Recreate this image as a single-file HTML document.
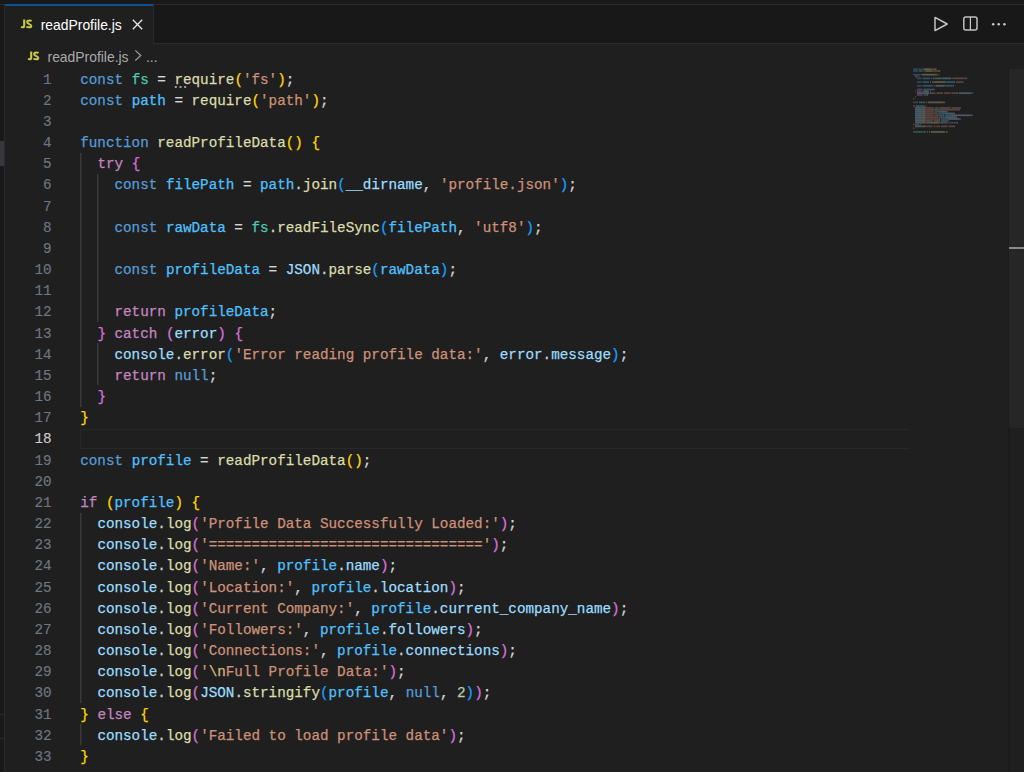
<!DOCTYPE html>
<html><head><meta charset="utf-8"><style>
*{margin:0;padding:0;box-sizing:border-box}
html,body{width:1024px;height:772px;overflow:hidden;background:#1f1f1f}
body{position:relative;font-family:"Liberation Sans",sans-serif}
.a{position:absolute}
.code{position:absolute;left:80.25px;top:69.50px;font-family:"Liberation Mono",monospace;font-size:14.28px;white-space:pre;-webkit-text-stroke:0.25px}
.ln{position:absolute;height:21.17px;line-height:21.17px;left:0}
.num{position:absolute;left:0;width:51.5px;text-align:right;font-family:"Liberation Mono",monospace;font-size:14.28px;color:#6e7681;white-space:pre;-webkit-text-stroke:0.15px}
.g{position:absolute;width:1px;background:#3a3a3a;box-shadow:1px 0 0 #2a2a2a}
.mm{position:absolute;height:1.5px}
</style></head><body>

<div class="a" style="left:0;top:0;width:1024px;height:4px;background:#191919"></div>
<div class="a" style="left:0;top:4px;width:1024px;height:1px;background:#2b2b2b"></div>
<div class="a" style="left:0;top:5px;width:1024px;height:38px;background:#181818"></div>
<div class="a" style="left:0;top:43px;width:1024px;height:1px;background:#2b2b2b"></div>
<div class="a" style="left:0;top:0;width:4px;height:772px;background:#191919"></div>
<div class="a" style="left:0;top:141px;width:3.5px;height:25px;background:#37373d"></div>
<div class="a" style="left:0;top:714px;width:4px;height:1px;background:#2b2b2b"></div>
<div class="a" style="left:0;top:738px;width:4px;height:1px;background:#2b2b2b"></div>
<div class="a" style="left:4px;top:5px;width:1px;height:767px;background:#2b2b2b"></div>
<div class="a" style="left:0;top:4px;width:5px;height:1px;background:#2b2b2b"></div>
<div class="a" style="left:5px;top:4px;width:148px;height:40px;background:#1f1f1f"></div>
<div class="a" style="left:5px;top:4px;width:148px;height:2px;background:#0d5290"></div>
<div class="a" style="left:153px;top:5px;width:1px;height:38px;background:#2b2b2b"></div>
<svg class="a" style="left:18.00px;top:16.00px" width="16" height="14" viewBox="18 16 16 14"><path d="M24.2 19.4 V25.4 C24.2 26.7 23.5 27.2 22.4 27.2 C21.9 27.2 21.5 27.1 21.0 26.9" stroke="#cbcb41" stroke-width="2.1" fill="none"/><path d="M31.6 20.8 C30.9 20.4 30.2 20.4 29.3 20.4 C27.9 20.4 27.1 21.1 27.1 22.1 C27.1 24.4 31.3 23.8 31.3 26.0 C31.3 27.0 30.5 27.3 29.2 27.3 C28.2 27.3 27.3 27.1 26.4 26.6" stroke="#cbcb41" stroke-width="2.0" fill="none"/></svg>
<div class="a" style="left:40.7px;top:16.2px;font-size:13.9px;color:#ffffff;line-height:18px">readProfile.js</div>
<svg class="a" style="left:131px;top:18px" width="13" height="13" viewBox="0 0 13 13"><path d="M1.8 1.8L11.2 11.2M11.2 1.8L1.8 11.2" stroke="#e8e8e8" stroke-width="1.3" fill="none"/></svg>
<svg class="a" style="left:928px;top:12px" width="84" height="24" viewBox="0 0 84 24"><path d="M7.0 5.4 L19.2 12.0 L7.0 18.6 Z" stroke="#c8c8c8" stroke-width="1.45" fill="none" stroke-linejoin="round"/><rect x="35.8" y="4.9" width="13.2" height="13.2" rx="2" stroke="#c0c0c0" stroke-width="1.5" fill="none"/><path d="M42.4 4.9 V18.1" stroke="#c8c8c8" stroke-width="1.2"/><circle cx="65.2" cy="12.2" r="1.25" fill="#cccccc"/><circle cx="70.7" cy="12.2" r="1.25" fill="#cccccc"/><circle cx="76.4" cy="12.2" r="1.25" fill="#cccccc"/></svg>
<svg class="a" style="left:24.60px;top:47.60px" width="16" height="14" viewBox="18 16 16 14"><path d="M24.2 19.4 V25.4 C24.2 26.7 23.5 27.2 22.4 27.2 C21.9 27.2 21.5 27.1 21.0 26.9" stroke="#cbcb41" stroke-width="2.1" fill="none"/><path d="M31.6 20.8 C30.9 20.4 30.2 20.4 29.3 20.4 C27.9 20.4 27.1 21.1 27.1 22.1 C27.1 24.4 31.3 23.8 31.3 26.0 C31.3 27.0 30.5 27.3 29.2 27.3 C28.2 27.3 27.3 27.1 26.4 26.6" stroke="#cbcb41" stroke-width="2.0" fill="none"/></svg>
<div class="a" style="left:47.5px;top:48.1px;font-size:13.9px;color:#a9a9a9;line-height:18px">readProfile.js</div>
<svg class="a" style="left:132px;top:49px" width="12" height="14" viewBox="0 0 12 14"><path d="M3.3 1.4 L8.8 6.5 L3.3 11.5" stroke="#a0a0a0" stroke-width="1.15" fill="none"/></svg>
<div class="a" style="left:146px;top:48.1px;font-size:13.9px;color:#a9a9a9;line-height:18px">...</div>
<div class="a" style="left:80px;top:428.54px;width:830px;height:20.2px;border:1px solid #282828;border-right:none"></div>
<div class="g" style="left:80.00px;top:152.67px;height:254.00px"></div>
<div class="g" style="left:97.00px;top:173.84px;height:148.17px"></div>
<div class="g" style="left:97.00px;top:343.17px;height:42.33px"></div>
<div class="g" style="left:80.00px;top:512.51px;height:190.50px"></div>
<div class="g" style="left:80.00px;top:724.18px;height:21.17px"></div>
<div class="num" style="top:69.50px;height:21.17px;line-height:21.17px;color:#6e7681">1</div>
<div class="num" style="top:90.67px;height:21.17px;line-height:21.17px;color:#6e7681">2</div>
<div class="num" style="top:111.83px;height:21.17px;line-height:21.17px;color:#6e7681">3</div>
<div class="num" style="top:133.00px;height:21.17px;line-height:21.17px;color:#6e7681">4</div>
<div class="num" style="top:154.17px;height:21.17px;line-height:21.17px;color:#6e7681">5</div>
<div class="num" style="top:175.34px;height:21.17px;line-height:21.17px;color:#6e7681">6</div>
<div class="num" style="top:196.50px;height:21.17px;line-height:21.17px;color:#6e7681">7</div>
<div class="num" style="top:217.67px;height:21.17px;line-height:21.17px;color:#6e7681">8</div>
<div class="num" style="top:238.84px;height:21.17px;line-height:21.17px;color:#6e7681">9</div>
<div class="num" style="top:260.00px;height:21.17px;line-height:21.17px;color:#6e7681">10</div>
<div class="num" style="top:281.17px;height:21.17px;line-height:21.17px;color:#6e7681">11</div>
<div class="num" style="top:302.34px;height:21.17px;line-height:21.17px;color:#6e7681">12</div>
<div class="num" style="top:323.50px;height:21.17px;line-height:21.17px;color:#6e7681">13</div>
<div class="num" style="top:344.67px;height:21.17px;line-height:21.17px;color:#6e7681">14</div>
<div class="num" style="top:365.84px;height:21.17px;line-height:21.17px;color:#6e7681">15</div>
<div class="num" style="top:387.00px;height:21.17px;line-height:21.17px;color:#6e7681">16</div>
<div class="num" style="top:408.17px;height:21.17px;line-height:21.17px;color:#6e7681">17</div>
<div class="num" style="top:429.34px;height:21.17px;line-height:21.17px;color:#cccccc">18</div>
<div class="num" style="top:450.51px;height:21.17px;line-height:21.17px;color:#6e7681">19</div>
<div class="num" style="top:471.67px;height:21.17px;line-height:21.17px;color:#6e7681">20</div>
<div class="num" style="top:492.84px;height:21.17px;line-height:21.17px;color:#6e7681">21</div>
<div class="num" style="top:514.01px;height:21.17px;line-height:21.17px;color:#6e7681">22</div>
<div class="num" style="top:535.17px;height:21.17px;line-height:21.17px;color:#6e7681">23</div>
<div class="num" style="top:556.34px;height:21.17px;line-height:21.17px;color:#6e7681">24</div>
<div class="num" style="top:577.51px;height:21.17px;line-height:21.17px;color:#6e7681">25</div>
<div class="num" style="top:598.68px;height:21.17px;line-height:21.17px;color:#6e7681">26</div>
<div class="num" style="top:619.84px;height:21.17px;line-height:21.17px;color:#6e7681">27</div>
<div class="num" style="top:641.01px;height:21.17px;line-height:21.17px;color:#6e7681">28</div>
<div class="num" style="top:662.18px;height:21.17px;line-height:21.17px;color:#6e7681">29</div>
<div class="num" style="top:683.34px;height:21.17px;line-height:21.17px;color:#6e7681">30</div>
<div class="num" style="top:704.51px;height:21.17px;line-height:21.17px;color:#6e7681">31</div>
<div class="num" style="top:725.68px;height:21.17px;line-height:21.17px;color:#6e7681">32</div>
<div class="num" style="top:746.84px;height:21.17px;line-height:21.17px;color:#6e7681">33</div>
<div class="code">
<div class="ln" style="top:0.00px"><span style="color:#569cd6">const</span><span style="color:#d4d4d4"> </span><span style="color:#4ec9b0">fs</span><span style="color:#d4d4d4"> = </span><span style="color:#dcdcaa">require</span><span style="color:#ffd700">(</span><span style="color:#ce9178">&#x27;fs&#x27;</span><span style="color:#ffd700">)</span><span style="color:#d4d4d4">;</span></div>
<div class="ln" style="top:21.17px"><span style="color:#569cd6">const</span><span style="color:#d4d4d4"> </span><span style="color:#4fc1ff">path</span><span style="color:#d4d4d4"> = </span><span style="color:#dcdcaa">require</span><span style="color:#ffd700">(</span><span style="color:#ce9178">&#x27;path&#x27;</span><span style="color:#ffd700">)</span><span style="color:#d4d4d4">;</span></div>
<div class="ln" style="top:42.33px"></div>
<div class="ln" style="top:63.50px"><span style="color:#569cd6">function</span><span style="color:#d4d4d4"> </span><span style="color:#dcdcaa">readProfileData</span><span style="color:#ffd700">()</span><span style="color:#d4d4d4"> </span><span style="color:#ffd700">{</span></div>
<div class="ln" style="top:84.67px"><span style="color:#d4d4d4">  </span><span style="color:#c586c0">try</span><span style="color:#d4d4d4"> </span><span style="color:#da70d6">{</span></div>
<div class="ln" style="top:105.84px"><span style="color:#d4d4d4">    </span><span style="color:#569cd6">const</span><span style="color:#d4d4d4"> </span><span style="color:#4fc1ff">filePath</span><span style="color:#d4d4d4"> = </span><span style="color:#4fc1ff">path</span><span style="color:#d4d4d4">.</span><span style="color:#dcdcaa">join</span><span style="color:#179fff">(</span><span style="color:#9cdcfe">__dirname</span><span style="color:#d4d4d4">, </span><span style="color:#ce9178">&#x27;profile.json&#x27;</span><span style="color:#179fff">)</span><span style="color:#d4d4d4">;</span></div>
<div class="ln" style="top:127.00px"></div>
<div class="ln" style="top:148.17px"><span style="color:#d4d4d4">    </span><span style="color:#569cd6">const</span><span style="color:#d4d4d4"> </span><span style="color:#4fc1ff">rawData</span><span style="color:#d4d4d4"> = </span><span style="color:#4ec9b0">fs</span><span style="color:#d4d4d4">.</span><span style="color:#dcdcaa">readFileSync</span><span style="color:#179fff">(</span><span style="color:#4fc1ff">filePath</span><span style="color:#d4d4d4">, </span><span style="color:#ce9178">&#x27;utf8&#x27;</span><span style="color:#179fff">)</span><span style="color:#d4d4d4">;</span></div>
<div class="ln" style="top:169.34px"></div>
<div class="ln" style="top:190.50px"><span style="color:#d4d4d4">    </span><span style="color:#569cd6">const</span><span style="color:#d4d4d4"> </span><span style="color:#4fc1ff">profileData</span><span style="color:#d4d4d4"> = </span><span style="color:#9cdcfe">JSON</span><span style="color:#d4d4d4">.</span><span style="color:#dcdcaa">parse</span><span style="color:#179fff">(</span><span style="color:#4fc1ff">rawData</span><span style="color:#179fff">)</span><span style="color:#d4d4d4">;</span></div>
<div class="ln" style="top:211.67px"></div>
<div class="ln" style="top:232.84px"><span style="color:#d4d4d4">    </span><span style="color:#c586c0">return</span><span style="color:#d4d4d4"> </span><span style="color:#4fc1ff">profileData</span><span style="color:#d4d4d4">;</span></div>
<div class="ln" style="top:254.00px"><span style="color:#d4d4d4">  </span><span style="color:#da70d6">}</span><span style="color:#d4d4d4"> </span><span style="color:#c586c0">catch</span><span style="color:#d4d4d4"> </span><span style="color:#da70d6">(</span><span style="color:#9cdcfe">error</span><span style="color:#da70d6">)</span><span style="color:#d4d4d4"> </span><span style="color:#da70d6">{</span></div>
<div class="ln" style="top:275.17px"><span style="color:#d4d4d4">    </span><span style="color:#9cdcfe">console</span><span style="color:#d4d4d4">.</span><span style="color:#dcdcaa">error</span><span style="color:#179fff">(</span><span style="color:#ce9178">&#x27;Error reading profile data:&#x27;</span><span style="color:#d4d4d4">, </span><span style="color:#9cdcfe">error</span><span style="color:#d4d4d4">.</span><span style="color:#9cdcfe">message</span><span style="color:#179fff">)</span><span style="color:#d4d4d4">;</span></div>
<div class="ln" style="top:296.34px"><span style="color:#d4d4d4">    </span><span style="color:#c586c0">return</span><span style="color:#d4d4d4"> </span><span style="color:#569cd6">null</span><span style="color:#d4d4d4">;</span></div>
<div class="ln" style="top:317.50px"><span style="color:#d4d4d4">  </span><span style="color:#da70d6">}</span></div>
<div class="ln" style="top:338.67px"><span style="color:#ffd700">}</span></div>
<div class="ln" style="top:359.84px"></div>
<div class="ln" style="top:381.01px"><span style="color:#569cd6">const</span><span style="color:#d4d4d4"> </span><span style="color:#4fc1ff">profile</span><span style="color:#d4d4d4"> = </span><span style="color:#dcdcaa">readProfileData</span><span style="color:#ffd700">()</span><span style="color:#d4d4d4">;</span></div>
<div class="ln" style="top:402.17px"></div>
<div class="ln" style="top:423.34px"><span style="color:#c586c0">if</span><span style="color:#d4d4d4"> </span><span style="color:#ffd700">(</span><span style="color:#4fc1ff">profile</span><span style="color:#ffd700">)</span><span style="color:#d4d4d4"> </span><span style="color:#ffd700">{</span></div>
<div class="ln" style="top:444.51px"><span style="color:#d4d4d4">  </span><span style="color:#9cdcfe">console</span><span style="color:#d4d4d4">.</span><span style="color:#dcdcaa">log</span><span style="color:#da70d6">(</span><span style="color:#ce9178">&#x27;Profile Data Successfully Loaded:&#x27;</span><span style="color:#da70d6">)</span><span style="color:#d4d4d4">;</span></div>
<div class="ln" style="top:465.67px"><span style="color:#d4d4d4">  </span><span style="color:#9cdcfe">console</span><span style="color:#d4d4d4">.</span><span style="color:#dcdcaa">log</span><span style="color:#da70d6">(</span><span style="color:#ce9178">&#x27;================================&#x27;</span><span style="color:#da70d6">)</span><span style="color:#d4d4d4">;</span></div>
<div class="ln" style="top:486.84px"><span style="color:#d4d4d4">  </span><span style="color:#9cdcfe">console</span><span style="color:#d4d4d4">.</span><span style="color:#dcdcaa">log</span><span style="color:#da70d6">(</span><span style="color:#ce9178">&#x27;Name:&#x27;</span><span style="color:#d4d4d4">, </span><span style="color:#4fc1ff">profile</span><span style="color:#d4d4d4">.</span><span style="color:#9cdcfe">name</span><span style="color:#da70d6">)</span><span style="color:#d4d4d4">;</span></div>
<div class="ln" style="top:508.01px"><span style="color:#d4d4d4">  </span><span style="color:#9cdcfe">console</span><span style="color:#d4d4d4">.</span><span style="color:#dcdcaa">log</span><span style="color:#da70d6">(</span><span style="color:#ce9178">&#x27;Location:&#x27;</span><span style="color:#d4d4d4">, </span><span style="color:#4fc1ff">profile</span><span style="color:#d4d4d4">.</span><span style="color:#9cdcfe">location</span><span style="color:#da70d6">)</span><span style="color:#d4d4d4">;</span></div>
<div class="ln" style="top:529.18px"><span style="color:#d4d4d4">  </span><span style="color:#9cdcfe">console</span><span style="color:#d4d4d4">.</span><span style="color:#dcdcaa">log</span><span style="color:#da70d6">(</span><span style="color:#ce9178">&#x27;Current Company:&#x27;</span><span style="color:#d4d4d4">, </span><span style="color:#4fc1ff">profile</span><span style="color:#d4d4d4">.</span><span style="color:#9cdcfe">current_company_name</span><span style="color:#da70d6">)</span><span style="color:#d4d4d4">;</span></div>
<div class="ln" style="top:550.34px"><span style="color:#d4d4d4">  </span><span style="color:#9cdcfe">console</span><span style="color:#d4d4d4">.</span><span style="color:#dcdcaa">log</span><span style="color:#da70d6">(</span><span style="color:#ce9178">&#x27;Followers:&#x27;</span><span style="color:#d4d4d4">, </span><span style="color:#4fc1ff">profile</span><span style="color:#d4d4d4">.</span><span style="color:#9cdcfe">followers</span><span style="color:#da70d6">)</span><span style="color:#d4d4d4">;</span></div>
<div class="ln" style="top:571.51px"><span style="color:#d4d4d4">  </span><span style="color:#9cdcfe">console</span><span style="color:#d4d4d4">.</span><span style="color:#dcdcaa">log</span><span style="color:#da70d6">(</span><span style="color:#ce9178">&#x27;Connections:&#x27;</span><span style="color:#d4d4d4">, </span><span style="color:#4fc1ff">profile</span><span style="color:#d4d4d4">.</span><span style="color:#9cdcfe">connections</span><span style="color:#da70d6">)</span><span style="color:#d4d4d4">;</span></div>
<div class="ln" style="top:592.68px"><span style="color:#d4d4d4">  </span><span style="color:#9cdcfe">console</span><span style="color:#d4d4d4">.</span><span style="color:#dcdcaa">log</span><span style="color:#da70d6">(</span><span style="color:#ce9178">&#x27;</span><span style="color:#d7ba7d">\n</span><span style="color:#ce9178">Full Profile Data:&#x27;</span><span style="color:#da70d6">)</span><span style="color:#d4d4d4">;</span></div>
<div class="ln" style="top:613.84px"><span style="color:#d4d4d4">  </span><span style="color:#9cdcfe">console</span><span style="color:#d4d4d4">.</span><span style="color:#dcdcaa">log</span><span style="color:#da70d6">(</span><span style="color:#9cdcfe">JSON</span><span style="color:#d4d4d4">.</span><span style="color:#dcdcaa">stringify</span><span style="color:#179fff">(</span><span style="color:#4fc1ff">profile</span><span style="color:#d4d4d4">, </span><span style="color:#569cd6">null</span><span style="color:#d4d4d4">, </span><span style="color:#b5cea8">2</span><span style="color:#179fff">)</span><span style="color:#da70d6">)</span><span style="color:#d4d4d4">;</span></div>
<div class="ln" style="top:635.01px"><span style="color:#ffd700">}</span><span style="color:#d4d4d4"> </span><span style="color:#c586c0">else</span><span style="color:#d4d4d4"> </span><span style="color:#ffd700">{</span></div>
<div class="ln" style="top:656.18px"><span style="color:#d4d4d4">  </span><span style="color:#9cdcfe">console</span><span style="color:#d4d4d4">.</span><span style="color:#dcdcaa">log</span><span style="color:#da70d6">(</span><span style="color:#ce9178">&#x27;Failed to load profile data&#x27;</span><span style="color:#da70d6">)</span><span style="color:#d4d4d4">;</span></div>
<div class="ln" style="top:677.34px"><span style="color:#ffd700">}</span></div>
<div class="ln" style="top:698.51px"></div>
</div>
<svg class="a" style="left:170px;top:82px" width="20" height="10" viewBox="0 0 20 10"><rect x="4.8" y="4" width="2" height="2" fill="#9a9a9a"/><rect x="9.5" y="4" width="2" height="2" fill="#9a9a9a"/><rect x="14.1" y="4" width="2" height="2" fill="#9a9a9a"/></svg>
<svg class="a" style="left:900px;top:60px" width="108" height="80" viewBox="900 60 108 80"><rect x="913.20" y="68.30" width="4.65" height="1.7" fill="#569cd6" fill-opacity=".33"/><rect x="918.78" y="68.30" width="1.86" height="1.7" fill="#4ec9b0" fill-opacity=".33"/><rect x="921.57" y="68.30" width="0.93" height="1.7" fill="#d4d4d4" fill-opacity=".33"/><rect x="923.43" y="68.30" width="6.51" height="1.7" fill="#dcdcaa" fill-opacity=".33"/><rect x="929.94" y="68.30" width="0.93" height="1.7" fill="#ffd700" fill-opacity=".33"/><rect x="930.87" y="68.30" width="3.72" height="1.7" fill="#ce9178" fill-opacity=".33"/><rect x="934.59" y="68.30" width="0.93" height="1.7" fill="#ffd700" fill-opacity=".33"/><rect x="935.52" y="68.30" width="0.93" height="1.7" fill="#d4d4d4" fill-opacity=".33"/><rect x="913.20" y="70.15" width="4.65" height="1.7" fill="#569cd6" fill-opacity=".33"/><rect x="918.78" y="70.15" width="3.72" height="1.7" fill="#4fc1ff" fill-opacity=".33"/><rect x="923.43" y="70.15" width="0.93" height="1.7" fill="#d4d4d4" fill-opacity=".33"/><rect x="925.29" y="70.15" width="6.51" height="1.7" fill="#dcdcaa" fill-opacity=".33"/><rect x="931.80" y="70.15" width="0.93" height="1.7" fill="#ffd700" fill-opacity=".33"/><rect x="932.73" y="70.15" width="5.58" height="1.7" fill="#ce9178" fill-opacity=".33"/><rect x="938.31" y="70.15" width="0.93" height="1.7" fill="#ffd700" fill-opacity=".33"/><rect x="939.24" y="70.15" width="0.93" height="1.7" fill="#d4d4d4" fill-opacity=".33"/><rect x="913.20" y="73.84" width="7.44" height="1.7" fill="#569cd6" fill-opacity=".33"/><rect x="921.57" y="73.84" width="13.95" height="1.7" fill="#dcdcaa" fill-opacity=".33"/><rect x="935.52" y="73.84" width="1.86" height="1.7" fill="#ffd700" fill-opacity=".33"/><rect x="938.31" y="73.84" width="0.93" height="1.7" fill="#ffd700" fill-opacity=".33"/><rect x="915.06" y="75.68" width="2.79" height="1.7" fill="#c586c0" fill-opacity=".33"/><rect x="918.78" y="75.68" width="0.93" height="1.7" fill="#da70d6" fill-opacity=".33"/><rect x="916.92" y="77.53" width="4.65" height="1.7" fill="#569cd6" fill-opacity=".33"/><rect x="922.50" y="77.53" width="7.44" height="1.7" fill="#4fc1ff" fill-opacity=".33"/><rect x="930.87" y="77.53" width="0.93" height="1.7" fill="#d4d4d4" fill-opacity=".33"/><rect x="932.73" y="77.53" width="3.72" height="1.7" fill="#4fc1ff" fill-opacity=".33"/><rect x="936.45" y="77.53" width="0.93" height="1.7" fill="#d4d4d4" fill-opacity=".33"/><rect x="937.38" y="77.53" width="3.72" height="1.7" fill="#dcdcaa" fill-opacity=".33"/><rect x="941.10" y="77.53" width="0.93" height="1.7" fill="#179fff" fill-opacity=".33"/><rect x="942.03" y="77.53" width="8.37" height="1.7" fill="#9cdcfe" fill-opacity=".33"/><rect x="950.40" y="77.53" width="0.93" height="1.7" fill="#d4d4d4" fill-opacity=".33"/><rect x="952.26" y="77.53" width="13.02" height="1.7" fill="#ce9178" fill-opacity=".33"/><rect x="965.28" y="77.53" width="0.93" height="1.7" fill="#179fff" fill-opacity=".33"/><rect x="966.21" y="77.53" width="0.93" height="1.7" fill="#d4d4d4" fill-opacity=".33"/><rect x="916.92" y="81.22" width="4.65" height="1.7" fill="#569cd6" fill-opacity=".33"/><rect x="922.50" y="81.22" width="6.51" height="1.7" fill="#4fc1ff" fill-opacity=".33"/><rect x="929.94" y="81.22" width="0.93" height="1.7" fill="#d4d4d4" fill-opacity=".33"/><rect x="931.80" y="81.22" width="1.86" height="1.7" fill="#4ec9b0" fill-opacity=".33"/><rect x="933.66" y="81.22" width="0.93" height="1.7" fill="#d4d4d4" fill-opacity=".33"/><rect x="934.59" y="81.22" width="11.16" height="1.7" fill="#dcdcaa" fill-opacity=".33"/><rect x="945.75" y="81.22" width="0.93" height="1.7" fill="#179fff" fill-opacity=".33"/><rect x="946.68" y="81.22" width="7.44" height="1.7" fill="#4fc1ff" fill-opacity=".33"/><rect x="954.12" y="81.22" width="0.93" height="1.7" fill="#d4d4d4" fill-opacity=".33"/><rect x="955.98" y="81.22" width="5.58" height="1.7" fill="#ce9178" fill-opacity=".33"/><rect x="961.56" y="81.22" width="0.93" height="1.7" fill="#179fff" fill-opacity=".33"/><rect x="962.49" y="81.22" width="0.93" height="1.7" fill="#d4d4d4" fill-opacity=".33"/><rect x="916.92" y="84.91" width="4.65" height="1.7" fill="#569cd6" fill-opacity=".33"/><rect x="922.50" y="84.91" width="10.23" height="1.7" fill="#4fc1ff" fill-opacity=".33"/><rect x="933.66" y="84.91" width="0.93" height="1.7" fill="#d4d4d4" fill-opacity=".33"/><rect x="935.52" y="84.91" width="3.72" height="1.7" fill="#9cdcfe" fill-opacity=".33"/><rect x="939.24" y="84.91" width="0.93" height="1.7" fill="#d4d4d4" fill-opacity=".33"/><rect x="940.17" y="84.91" width="4.65" height="1.7" fill="#dcdcaa" fill-opacity=".33"/><rect x="944.82" y="84.91" width="0.93" height="1.7" fill="#179fff" fill-opacity=".33"/><rect x="945.75" y="84.91" width="6.51" height="1.7" fill="#4fc1ff" fill-opacity=".33"/><rect x="952.26" y="84.91" width="0.93" height="1.7" fill="#179fff" fill-opacity=".33"/><rect x="953.19" y="84.91" width="0.93" height="1.7" fill="#d4d4d4" fill-opacity=".33"/><rect x="916.92" y="88.61" width="5.58" height="1.7" fill="#c586c0" fill-opacity=".33"/><rect x="923.43" y="88.61" width="10.23" height="1.7" fill="#4fc1ff" fill-opacity=".33"/><rect x="933.66" y="88.61" width="0.93" height="1.7" fill="#d4d4d4" fill-opacity=".33"/><rect x="915.06" y="90.45" width="0.93" height="1.7" fill="#da70d6" fill-opacity=".33"/><rect x="916.92" y="90.45" width="4.65" height="1.7" fill="#c586c0" fill-opacity=".33"/><rect x="922.50" y="90.45" width="0.93" height="1.7" fill="#da70d6" fill-opacity=".33"/><rect x="923.43" y="90.45" width="4.65" height="1.7" fill="#9cdcfe" fill-opacity=".33"/><rect x="928.08" y="90.45" width="0.93" height="1.7" fill="#da70d6" fill-opacity=".33"/><rect x="929.94" y="90.45" width="0.93" height="1.7" fill="#da70d6" fill-opacity=".33"/><rect x="916.92" y="92.30" width="6.51" height="1.7" fill="#9cdcfe" fill-opacity=".33"/><rect x="923.43" y="92.30" width="0.93" height="1.7" fill="#d4d4d4" fill-opacity=".33"/><rect x="924.36" y="92.30" width="4.65" height="1.7" fill="#dcdcaa" fill-opacity=".33"/><rect x="929.01" y="92.30" width="0.93" height="1.7" fill="#179fff" fill-opacity=".33"/><rect x="929.94" y="92.30" width="5.58" height="1.7" fill="#ce9178" fill-opacity=".33"/><rect x="936.45" y="92.30" width="6.51" height="1.7" fill="#ce9178" fill-opacity=".33"/><rect x="943.89" y="92.30" width="6.51" height="1.7" fill="#ce9178" fill-opacity=".33"/><rect x="951.33" y="92.30" width="5.58" height="1.7" fill="#ce9178" fill-opacity=".33"/><rect x="956.91" y="92.30" width="0.93" height="1.7" fill="#d4d4d4" fill-opacity=".33"/><rect x="958.77" y="92.30" width="4.65" height="1.7" fill="#9cdcfe" fill-opacity=".33"/><rect x="963.42" y="92.30" width="0.93" height="1.7" fill="#d4d4d4" fill-opacity=".33"/><rect x="964.35" y="92.30" width="6.51" height="1.7" fill="#9cdcfe" fill-opacity=".33"/><rect x="970.86" y="92.30" width="0.93" height="1.7" fill="#179fff" fill-opacity=".33"/><rect x="971.79" y="92.30" width="0.93" height="1.7" fill="#d4d4d4" fill-opacity=".33"/><rect x="916.92" y="94.14" width="5.58" height="1.7" fill="#c586c0" fill-opacity=".33"/><rect x="923.43" y="94.14" width="3.72" height="1.7" fill="#569cd6" fill-opacity=".33"/><rect x="927.15" y="94.14" width="0.93" height="1.7" fill="#d4d4d4" fill-opacity=".33"/><rect x="915.06" y="95.99" width="0.93" height="1.7" fill="#da70d6" fill-opacity=".33"/><rect x="913.20" y="97.84" width="0.93" height="1.7" fill="#ffd700" fill-opacity=".33"/><rect x="913.20" y="101.53" width="4.65" height="1.7" fill="#569cd6" fill-opacity=".33"/><rect x="918.78" y="101.53" width="6.51" height="1.7" fill="#4fc1ff" fill-opacity=".33"/><rect x="926.22" y="101.53" width="0.93" height="1.7" fill="#d4d4d4" fill-opacity=".33"/><rect x="928.08" y="101.53" width="13.95" height="1.7" fill="#dcdcaa" fill-opacity=".33"/><rect x="942.03" y="101.53" width="1.86" height="1.7" fill="#ffd700" fill-opacity=".33"/><rect x="943.89" y="101.53" width="0.93" height="1.7" fill="#d4d4d4" fill-opacity=".33"/><rect x="913.20" y="105.22" width="1.86" height="1.7" fill="#c586c0" fill-opacity=".33"/><rect x="915.99" y="105.22" width="0.93" height="1.7" fill="#ffd700" fill-opacity=".33"/><rect x="916.92" y="105.22" width="6.51" height="1.7" fill="#4fc1ff" fill-opacity=".33"/><rect x="923.43" y="105.22" width="0.93" height="1.7" fill="#ffd700" fill-opacity=".33"/><rect x="925.29" y="105.22" width="0.93" height="1.7" fill="#ffd700" fill-opacity=".33"/><rect x="915.06" y="107.07" width="6.51" height="1.7" fill="#9cdcfe" fill-opacity=".33"/><rect x="921.57" y="107.07" width="0.93" height="1.7" fill="#d4d4d4" fill-opacity=".33"/><rect x="922.50" y="107.07" width="2.79" height="1.7" fill="#dcdcaa" fill-opacity=".33"/><rect x="925.29" y="107.07" width="0.93" height="1.7" fill="#da70d6" fill-opacity=".33"/><rect x="926.22" y="107.07" width="7.44" height="1.7" fill="#ce9178" fill-opacity=".33"/><rect x="934.59" y="107.07" width="3.72" height="1.7" fill="#ce9178" fill-opacity=".33"/><rect x="939.24" y="107.07" width="11.16" height="1.7" fill="#ce9178" fill-opacity=".33"/><rect x="951.33" y="107.07" width="7.44" height="1.7" fill="#ce9178" fill-opacity=".33"/><rect x="958.77" y="107.07" width="0.93" height="1.7" fill="#da70d6" fill-opacity=".33"/><rect x="959.70" y="107.07" width="0.93" height="1.7" fill="#d4d4d4" fill-opacity=".33"/><rect x="915.06" y="108.91" width="6.51" height="1.7" fill="#9cdcfe" fill-opacity=".33"/><rect x="921.57" y="108.91" width="0.93" height="1.7" fill="#d4d4d4" fill-opacity=".33"/><rect x="922.50" y="108.91" width="2.79" height="1.7" fill="#dcdcaa" fill-opacity=".33"/><rect x="925.29" y="108.91" width="0.93" height="1.7" fill="#da70d6" fill-opacity=".33"/><rect x="926.22" y="108.91" width="31.62" height="1.7" fill="#ce9178" fill-opacity=".33"/><rect x="957.84" y="108.91" width="0.93" height="1.7" fill="#da70d6" fill-opacity=".33"/><rect x="958.77" y="108.91" width="0.93" height="1.7" fill="#d4d4d4" fill-opacity=".33"/><rect x="915.06" y="110.76" width="6.51" height="1.7" fill="#9cdcfe" fill-opacity=".33"/><rect x="921.57" y="110.76" width="0.93" height="1.7" fill="#d4d4d4" fill-opacity=".33"/><rect x="922.50" y="110.76" width="2.79" height="1.7" fill="#dcdcaa" fill-opacity=".33"/><rect x="925.29" y="110.76" width="0.93" height="1.7" fill="#da70d6" fill-opacity=".33"/><rect x="926.22" y="110.76" width="6.51" height="1.7" fill="#ce9178" fill-opacity=".33"/><rect x="932.73" y="110.76" width="0.93" height="1.7" fill="#d4d4d4" fill-opacity=".33"/><rect x="934.59" y="110.76" width="6.51" height="1.7" fill="#4fc1ff" fill-opacity=".33"/><rect x="941.10" y="110.76" width="0.93" height="1.7" fill="#d4d4d4" fill-opacity=".33"/><rect x="942.03" y="110.76" width="3.72" height="1.7" fill="#9cdcfe" fill-opacity=".33"/><rect x="945.75" y="110.76" width="0.93" height="1.7" fill="#da70d6" fill-opacity=".33"/><rect x="946.68" y="110.76" width="0.93" height="1.7" fill="#d4d4d4" fill-opacity=".33"/><rect x="915.06" y="112.60" width="6.51" height="1.7" fill="#9cdcfe" fill-opacity=".33"/><rect x="921.57" y="112.60" width="0.93" height="1.7" fill="#d4d4d4" fill-opacity=".33"/><rect x="922.50" y="112.60" width="2.79" height="1.7" fill="#dcdcaa" fill-opacity=".33"/><rect x="925.29" y="112.60" width="0.93" height="1.7" fill="#da70d6" fill-opacity=".33"/><rect x="926.22" y="112.60" width="10.23" height="1.7" fill="#ce9178" fill-opacity=".33"/><rect x="936.45" y="112.60" width="0.93" height="1.7" fill="#d4d4d4" fill-opacity=".33"/><rect x="938.31" y="112.60" width="6.51" height="1.7" fill="#4fc1ff" fill-opacity=".33"/><rect x="944.82" y="112.60" width="0.93" height="1.7" fill="#d4d4d4" fill-opacity=".33"/><rect x="945.75" y="112.60" width="7.44" height="1.7" fill="#9cdcfe" fill-opacity=".33"/><rect x="953.19" y="112.60" width="0.93" height="1.7" fill="#da70d6" fill-opacity=".33"/><rect x="954.12" y="112.60" width="0.93" height="1.7" fill="#d4d4d4" fill-opacity=".33"/><rect x="915.06" y="114.45" width="6.51" height="1.7" fill="#9cdcfe" fill-opacity=".33"/><rect x="921.57" y="114.45" width="0.93" height="1.7" fill="#d4d4d4" fill-opacity=".33"/><rect x="922.50" y="114.45" width="2.79" height="1.7" fill="#dcdcaa" fill-opacity=".33"/><rect x="925.29" y="114.45" width="0.93" height="1.7" fill="#da70d6" fill-opacity=".33"/><rect x="926.22" y="114.45" width="7.44" height="1.7" fill="#ce9178" fill-opacity=".33"/><rect x="934.59" y="114.45" width="8.37" height="1.7" fill="#ce9178" fill-opacity=".33"/><rect x="942.96" y="114.45" width="0.93" height="1.7" fill="#d4d4d4" fill-opacity=".33"/><rect x="944.82" y="114.45" width="6.51" height="1.7" fill="#4fc1ff" fill-opacity=".33"/><rect x="951.33" y="114.45" width="0.93" height="1.7" fill="#d4d4d4" fill-opacity=".33"/><rect x="952.26" y="114.45" width="18.60" height="1.7" fill="#9cdcfe" fill-opacity=".33"/><rect x="970.86" y="114.45" width="0.93" height="1.7" fill="#da70d6" fill-opacity=".33"/><rect x="971.79" y="114.45" width="0.93" height="1.7" fill="#d4d4d4" fill-opacity=".33"/><rect x="915.06" y="116.30" width="6.51" height="1.7" fill="#9cdcfe" fill-opacity=".33"/><rect x="921.57" y="116.30" width="0.93" height="1.7" fill="#d4d4d4" fill-opacity=".33"/><rect x="922.50" y="116.30" width="2.79" height="1.7" fill="#dcdcaa" fill-opacity=".33"/><rect x="925.29" y="116.30" width="0.93" height="1.7" fill="#da70d6" fill-opacity=".33"/><rect x="926.22" y="116.30" width="11.16" height="1.7" fill="#ce9178" fill-opacity=".33"/><rect x="937.38" y="116.30" width="0.93" height="1.7" fill="#d4d4d4" fill-opacity=".33"/><rect x="939.24" y="116.30" width="6.51" height="1.7" fill="#4fc1ff" fill-opacity=".33"/><rect x="945.75" y="116.30" width="0.93" height="1.7" fill="#d4d4d4" fill-opacity=".33"/><rect x="946.68" y="116.30" width="8.37" height="1.7" fill="#9cdcfe" fill-opacity=".33"/><rect x="955.05" y="116.30" width="0.93" height="1.7" fill="#da70d6" fill-opacity=".33"/><rect x="955.98" y="116.30" width="0.93" height="1.7" fill="#d4d4d4" fill-opacity=".33"/><rect x="915.06" y="118.14" width="6.51" height="1.7" fill="#9cdcfe" fill-opacity=".33"/><rect x="921.57" y="118.14" width="0.93" height="1.7" fill="#d4d4d4" fill-opacity=".33"/><rect x="922.50" y="118.14" width="2.79" height="1.7" fill="#dcdcaa" fill-opacity=".33"/><rect x="925.29" y="118.14" width="0.93" height="1.7" fill="#da70d6" fill-opacity=".33"/><rect x="926.22" y="118.14" width="13.02" height="1.7" fill="#ce9178" fill-opacity=".33"/><rect x="939.24" y="118.14" width="0.93" height="1.7" fill="#d4d4d4" fill-opacity=".33"/><rect x="941.10" y="118.14" width="6.51" height="1.7" fill="#4fc1ff" fill-opacity=".33"/><rect x="947.61" y="118.14" width="0.93" height="1.7" fill="#d4d4d4" fill-opacity=".33"/><rect x="948.54" y="118.14" width="10.23" height="1.7" fill="#9cdcfe" fill-opacity=".33"/><rect x="958.77" y="118.14" width="0.93" height="1.7" fill="#da70d6" fill-opacity=".33"/><rect x="959.70" y="118.14" width="0.93" height="1.7" fill="#d4d4d4" fill-opacity=".33"/><rect x="915.06" y="119.99" width="6.51" height="1.7" fill="#9cdcfe" fill-opacity=".33"/><rect x="921.57" y="119.99" width="0.93" height="1.7" fill="#d4d4d4" fill-opacity=".33"/><rect x="922.50" y="119.99" width="2.79" height="1.7" fill="#dcdcaa" fill-opacity=".33"/><rect x="925.29" y="119.99" width="0.93" height="1.7" fill="#da70d6" fill-opacity=".33"/><rect x="926.22" y="119.99" width="0.93" height="1.7" fill="#ce9178" fill-opacity=".33"/><rect x="927.15" y="119.99" width="1.86" height="1.7" fill="#d7ba7d" fill-opacity=".33"/><rect x="929.01" y="119.99" width="3.72" height="1.7" fill="#ce9178" fill-opacity=".33"/><rect x="933.66" y="119.99" width="6.51" height="1.7" fill="#ce9178" fill-opacity=".33"/><rect x="941.10" y="119.99" width="5.58" height="1.7" fill="#ce9178" fill-opacity=".33"/><rect x="946.68" y="119.99" width="0.93" height="1.7" fill="#da70d6" fill-opacity=".33"/><rect x="947.61" y="119.99" width="0.93" height="1.7" fill="#d4d4d4" fill-opacity=".33"/><rect x="915.06" y="121.83" width="6.51" height="1.7" fill="#9cdcfe" fill-opacity=".33"/><rect x="921.57" y="121.83" width="0.93" height="1.7" fill="#d4d4d4" fill-opacity=".33"/><rect x="922.50" y="121.83" width="2.79" height="1.7" fill="#dcdcaa" fill-opacity=".33"/><rect x="925.29" y="121.83" width="0.93" height="1.7" fill="#da70d6" fill-opacity=".33"/><rect x="926.22" y="121.83" width="3.72" height="1.7" fill="#9cdcfe" fill-opacity=".33"/><rect x="929.94" y="121.83" width="0.93" height="1.7" fill="#d4d4d4" fill-opacity=".33"/><rect x="930.87" y="121.83" width="8.37" height="1.7" fill="#dcdcaa" fill-opacity=".33"/><rect x="939.24" y="121.83" width="0.93" height="1.7" fill="#179fff" fill-opacity=".33"/><rect x="940.17" y="121.83" width="6.51" height="1.7" fill="#4fc1ff" fill-opacity=".33"/><rect x="946.68" y="121.83" width="0.93" height="1.7" fill="#d4d4d4" fill-opacity=".33"/><rect x="948.54" y="121.83" width="3.72" height="1.7" fill="#569cd6" fill-opacity=".33"/><rect x="952.26" y="121.83" width="0.93" height="1.7" fill="#d4d4d4" fill-opacity=".33"/><rect x="954.12" y="121.83" width="0.93" height="1.7" fill="#b5cea8" fill-opacity=".33"/><rect x="955.05" y="121.83" width="0.93" height="1.7" fill="#179fff" fill-opacity=".33"/><rect x="955.98" y="121.83" width="0.93" height="1.7" fill="#da70d6" fill-opacity=".33"/><rect x="956.91" y="121.83" width="0.93" height="1.7" fill="#d4d4d4" fill-opacity=".33"/><rect x="913.20" y="123.68" width="0.93" height="1.7" fill="#ffd700" fill-opacity=".33"/><rect x="915.06" y="123.68" width="3.72" height="1.7" fill="#c586c0" fill-opacity=".33"/><rect x="919.71" y="123.68" width="0.93" height="1.7" fill="#ffd700" fill-opacity=".33"/><rect x="915.06" y="125.53" width="6.51" height="1.7" fill="#9cdcfe" fill-opacity=".33"/><rect x="921.57" y="125.53" width="0.93" height="1.7" fill="#d4d4d4" fill-opacity=".33"/><rect x="922.50" y="125.53" width="2.79" height="1.7" fill="#dcdcaa" fill-opacity=".33"/><rect x="925.29" y="125.53" width="0.93" height="1.7" fill="#da70d6" fill-opacity=".33"/><rect x="926.22" y="125.53" width="6.51" height="1.7" fill="#ce9178" fill-opacity=".33"/><rect x="933.66" y="125.53" width="1.86" height="1.7" fill="#ce9178" fill-opacity=".33"/><rect x="936.45" y="125.53" width="3.72" height="1.7" fill="#ce9178" fill-opacity=".33"/><rect x="941.10" y="125.53" width="6.51" height="1.7" fill="#ce9178" fill-opacity=".33"/><rect x="948.54" y="125.53" width="4.65" height="1.7" fill="#ce9178" fill-opacity=".33"/><rect x="953.19" y="125.53" width="0.93" height="1.7" fill="#da70d6" fill-opacity=".33"/><rect x="954.12" y="125.53" width="0.93" height="1.7" fill="#d4d4d4" fill-opacity=".33"/><rect x="913.20" y="127.37" width="0.93" height="1.7" fill="#ffd700" fill-opacity=".33"/><rect x="913.20" y="131.06" width="5.58" height="1.7" fill="#4ec9b0" fill-opacity=".33"/><rect x="918.78" y="131.06" width="0.93" height="1.7" fill="#d4d4d4" fill-opacity=".33"/><rect x="919.71" y="131.06" width="6.51" height="1.7" fill="#4ec9b0" fill-opacity=".33"/><rect x="927.15" y="131.06" width="0.93" height="1.7" fill="#d4d4d4" fill-opacity=".33"/><rect x="929.01" y="131.06" width="0.93" height="1.7" fill="#ffd700" fill-opacity=".33"/><rect x="930.87" y="131.06" width="13.95" height="1.7" fill="#dcdcaa" fill-opacity=".33"/><rect x="945.75" y="131.06" width="0.93" height="1.7" fill="#ffd700" fill-opacity=".33"/><rect x="946.68" y="131.06" width="0.93" height="1.7" fill="#d4d4d4" fill-opacity=".33"/></svg>
<div class="a" style="left:1008px;top:68px;width:1.5px;height:704px;background:#1b1b1b"></div>
<div class="a" style="left:1009px;top:68.5px;width:15px;height:359px;background:#262626"></div>
<div class="a" style="left:1009px;top:247px;width:15px;height:2px;background:#8a8a8a"></div>
</body></html>
